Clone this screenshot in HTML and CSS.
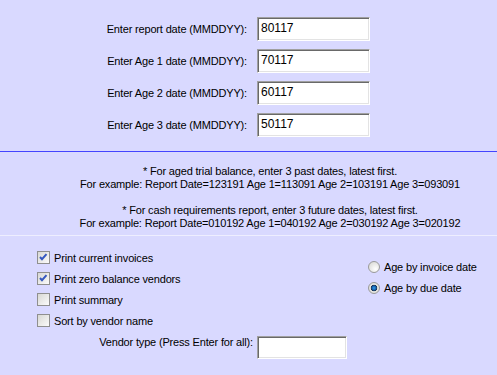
FILE: index.html
```html
<!DOCTYPE html>
<html>
<head>
<meta charset="utf-8" />
<title>Aging report options</title>
<link rel="stylesheet" href="styles.css">
</head>
<body>
<div class="dates">
    <div class="row"><label>Enter report date (MMDDYY):</label><div class="field">80117</div></div>
    <div class="row"><label>Enter Age 1 date (MMDDYY):</label><div class="field">70117</div></div>
    <div class="row"><label>Enter Age 2 date (MMDDYY):</label><div class="field">60117</div></div>
    <div class="row"><label>Enter Age 3 date (MMDDYY):</label><div class="field">50117</div></div>
</div>
<div class="notes">
    <p>* For aged trial balance, enter 3 past dates, latest first.<br />For example: Report Date=123191 Age 1=113091 Age 2=103191 Age 3=093091</p>
    <p>* For cash requirements report, enter 3 future dates, latest first.<br />For example: Report Date=010192 Age 1=040192 Age 2=030192 Age 3=020192</p>
</div>
<div class="options">
    <div class="cols">
        <ul class="checks">
            <li><span class="box on"><svg width="13" height="13" viewBox="0 0 13 13"><path d="M3 6l2 2.2 4.5-5" fill="none" stroke="#3558c0" stroke-width="2"/></svg></span>Print current invoices</li>
            <li><span class="box on"><svg width="13" height="13" viewBox="0 0 13 13"><path d="M3 6l2 2.2 4.5-5" fill="none" stroke="#3558c0" stroke-width="2"/></svg></span>Print zero balance vendors</li>
            <li><span class="box"></span>Print summary</li>
            <li><span class="box"></span>Sort by vendor name</li>
        </ul>
        <ul class="radios">
            <li><span class="dot"></span>Age by invoice date</li>
            <li><span class="dot on"></span>Age by due date</li>
        </ul>
    </div>
    <div class="vendor"><label>Vendor type (Press Enter for all):</label><div class="field short"></div></div>
</div>
</body>
</html>
```

FILE: styles.css
```css
html,body{margin:0;padding:0;height:100%;}
body{background:#d9d9ff;font:11px "Liberation Sans",Arial,sans-serif;letter-spacing:-0.17px;color:#000;overflow:hidden;}
p,ul,li{margin:0;padding:0;}
ul{list-style-type:none;}

.field{box-sizing:border-box;width:113px;height:24px;background:#fff;border:1px solid;border-color:#a0a0a0 #fff #fff #a0a0a0;box-shadow:inset 1px 1px 0 #696969,inset -1px -1px 0 #e3e3e3;padding:3px 0 0 3px;font-size:12px;line-height:14px;letter-spacing:0;}

.dates{padding:17px 0 14px;border-bottom:1px solid #4444ff;display:flex;flex-direction:column;gap:8px;}
.row{display:flex;align-items:center;gap:10px;}
.row label{width:247px;text-align:right;}

.notes{padding:13px 0 5px 43px;text-align:center;line-height:13px;border-bottom:1px solid #eeeeff;}
.notes p+p{margin-top:13px;}

.options{padding:11px 0 0 37px;}
.cols{display:flex;}
.checks{width:331px;}
.checks li,.radios li{height:21px;display:flex;align-items:center;}
.radios{padding-top:9px;}
.box{box-sizing:border-box;width:13px;height:13px;border:1px solid #8f8f8f;background:linear-gradient(135deg,#d8d8d4,#fbfbfb);margin-right:4px;position:relative;}
.box svg{position:absolute;left:-1px;top:-1px;}
.dot{box-sizing:border-box;width:12px;height:12px;border-radius:50%;border:1px solid #9a9a9a;background:radial-gradient(circle at 65% 70%,#fff,#d4d4d0);margin-right:4px;}
.dot.on{background:radial-gradient(circle at 50% 50%,#3aa0e8 0,#1060b0 2px,#20304a 3px,#e8e8e4 3.6px,#d0d0cc 100%);}

.vendor{display:flex;align-items:flex-start;gap:4px;margin-top:5px;}
.vendor label{width:216px;text-align:right;line-height:13px;}
.field.short{width:90px;height:23px;}
```
